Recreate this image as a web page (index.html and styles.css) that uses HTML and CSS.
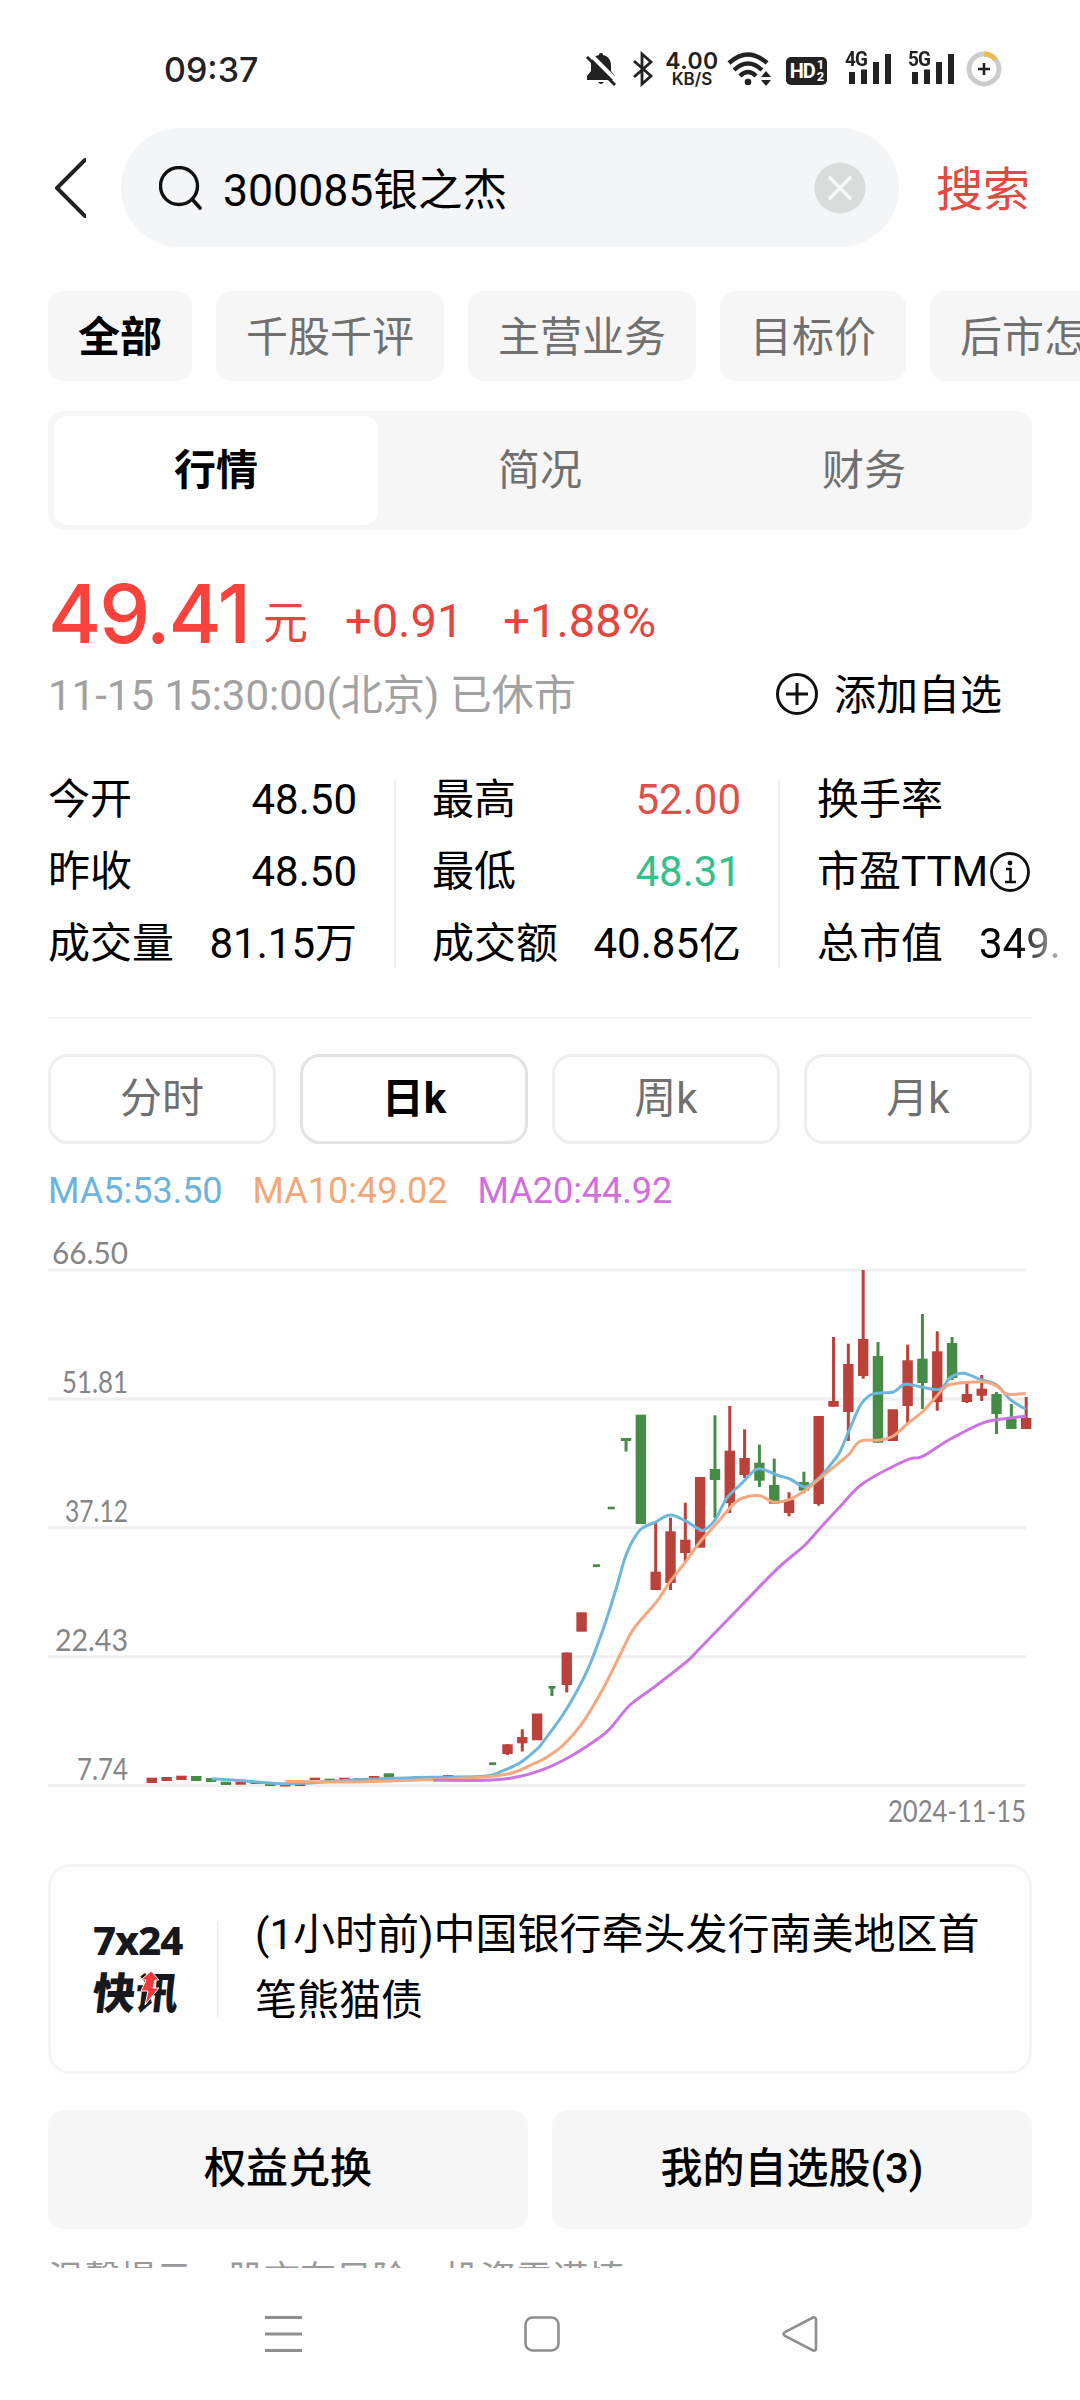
FILE: index.html
```html
<!DOCTYPE html>
<html lang="zh-CN">
<head>
<meta charset="utf-8">
<title>300085银之杰</title>
<link rel="stylesheet" href="styles.css">
</head>
<body>
<div class="screen">
  <header class="status">
    <span class="clock">09:37</span>
    <div class="status-icons">
      <svg class="i-bell" width="32" height="36" viewBox="0 0 32 36"><path d="M16 2c-1.500 0-2 .8-2 2C9 5 6 9 6 14v6l-4 5v4h28v-4l-4-5v-6c0-5-3-9-8-10 0-1.200-.5-2-2-2z" fill="#222"/><path d="M13 31h6q-3 4-6 0z" fill="#222"/><path d="M5 3l28 28" stroke="#fff" stroke-width="4"/><path d="M2 6l28 28" stroke="#222" stroke-width="3"/></svg>
      <svg class="i-bt" width="22" height="36" viewBox="0 0 22 36"><path d="M2 10l17 15-9 8V3l9 8L2 26" fill="none" stroke="#222" stroke-width="2.800"/></svg>
      <div class="speed"><b>4.00</b><span>KB/S</span></div>
      <svg class="i-wifi" width="46" height="36" viewBox="0 0 46 36"><g fill="none" stroke="#222" stroke-width="4.400"><path d="M2 12Q21-5 40 12"/><path d="M7 19Q21 6 35 19"/><path d="M13 25Q21 17 29 25"/></g><circle cx="21" cy="31" r="3.300" fill="#222"/><path d="M34 26l5-6 5 6zM34 29h10l-5 6z" fill="#222"/></svg>
      <div class="hd"><span>HD</span><span class="hd-n"><i>1</i><i>2</i></span></div>
      <div class="sig"><em>4G</em><svg width="46" height="36" viewBox="0 0 46 36"><path d="M3 21h6v12H3zM15 18.500h6V33h-6zM27 11h6v22h-6zM39 3h6v30h-6z" fill="#222"/></svg></div>
      <div class="sig"><em>5G</em><svg width="46" height="36" viewBox="0 0 46 36"><path d="M3 21h6v12H3zM15 18.500h6V33h-6zM27 11h6v22h-6zM39 3h6v30h-6z" fill="#222"/></svg></div>
      <svg class="i-batt" width="36" height="36" viewBox="0 0 36 36"><circle cx="18" cy="18" r="15" fill="none" stroke="#ccc" stroke-width="5"/><path d="M18 3A15 15 0 0 1 29.500 8.500" fill="none" stroke="#e9bd4d" stroke-width="5"/><path d="M18 12v12M12 18h12" stroke="#222" stroke-width="2.600"/></svg>
    </div>
  </header>

  <div class="searchbar">
    <svg class="back" width="34" height="62" viewBox="0 0 34 62"><path d="M33 3L5 31l28 28" fill="none" stroke="#222" stroke-width="4" stroke-linecap="round" stroke-linejoin="round"/></svg>
    <div class="field">
      <svg width="44" height="44" viewBox="0 0 44 44"><circle cx="20" cy="20" r="18.500" fill="none" stroke="#111" stroke-width="3.400"/><path d="M33 33l8 9" stroke="#111" stroke-width="3.600" stroke-linecap="round"/></svg>
      <span class="query">300085银之杰</span>
      <svg class="clear" width="52" height="52" viewBox="0 0 52 52"><circle cx="26" cy="26" r="25.500" fill="#dadbdb"/><path d="M16 16l20 20M36 16L16 36" stroke="#f6f7f7" stroke-width="3.600" stroke-linecap="round"/></svg>
    </div>
    <span class="go">搜索</span>
  </div>

  <nav class="chips">
    <span class="chip on">全部</span><span class="chip">千股千评</span><span class="chip">主营业务</span><span class="chip">目标价</span><span class="chip">后市怎么看</span>
  </nav>

  <div class="segment"><span class="on">行情</span><span>简况</span><span>财务</span></div>

  <div class="price"><span class="now">49.41</span><span class="unit">元</span><span class="chg">+0.91</span><span class="pct">+1.88%</span></div>
  <div class="meta">
    <span class="time">11-15 15:30:00(北京) 已休市</span>
    <span class="add"><svg width="44" height="44" viewBox="0 0 44 44"><path d="M22 11v22M11 22h22" stroke="#111" stroke-width="3"/><circle cx="22" cy="22" r="19.500" fill="none" stroke="#111" stroke-width="3"/></svg>添加自选</span>
  </div>

  <section class="stats">
    <div class="col"><p><span>今开</span><span class="v">48.50</span></p><p><span>昨收</span><span class="v">48.50</span></p><p><span>成交量</span><span class="v">81.15万</span></p></div>
    <div class="col"><p><span>最高</span><span class="v up">52.00</span></p><p><span>最低</span><span class="v down">48.31</span></p><p><span>成交额</span><span class="v">40.85亿</span></p></div>
    <div class="col last"><p><span>换手率</span></p><p class="pe"><span>市盈TTM</span><svg width="42" height="42" viewBox="0 0 42 42"><circle cx="21" cy="21" r="18.500" fill="none" stroke="#111" stroke-width="2.800"/><circle cx="21" cy="12" r="2.400" fill="#111"/><path d="M17 18h4.500v13M16 31h11" fill="none" stroke="#111" stroke-width="2.600"/></svg></p><p><span>总市值</span><span class="cut">349.</span></p></div>
  </section>
  <hr>

  <div class="periods"><span>分时</span><span class="on">日k</span><span>周k</span><span>月k</span></div>
  <div class="legend"><span class="ma5">MA5:53.50</span><span class="ma10">MA10:49.02</span><span class="ma20">MA20:44.92</span></div>
  <svg class="chart" id="chart" width="1080" height="620" viewBox="0 1220 1080 620"></svg>

  <section class="news">
    <div class="logo"><span class="l1">7x24</span><span class="l2">快讯</span><svg class="bolt" width="22" height="36" viewBox="0 0 22 36"><path d="M12 0l8 9h-4l-2 8h6L6 34l3-14H2l5-11H2z" fill="#f4393c" stroke="#fefefe" stroke-width="1"/></svg></div>
    <p>(1小时前)中国银行牵头发行南美地区首笔熊猫债</p>
  </section>

  <div class="actions"><span>权益兑换</span><span class="mine">我的自选股(3)</span></div>
  <div class="tip">温馨提示：股市有风险，投资需谨慎</div>

  <footer class="sysnav">
    <svg width="38" height="38" viewBox="0 0 38 38"><path d="M0 2.500h37M0 19h37M0 35.500h37" stroke="#8f8f8f" stroke-width="2.800"/></svg>
    <svg width="38" height="38" viewBox="0 0 38 38"><rect x="2.500" y="2.500" width="33" height="33" rx="7" fill="none" stroke="#8f8f8f" stroke-width="2.600"/></svg>
    <svg width="38" height="38" viewBox="0 0 38 38"><path d="M32 2.500L4 17q-3 2 0 4L32 35.500q3 .5 3-2V4.500q0-2.500-3-2z" fill="none" stroke="#8f8f8f" stroke-width="2.600"/></svg>
  </footer>
</div>
<script src="chart.js"></script>
</body>
</html>
```
FILE: styles.css
```css
* { box-sizing: border-box; margin: 0; padding: 0; }
body { width: 1080px; height: 2400px; overflow: hidden; background: #fefefe; color: #000; font-family: Roboto, "Noto Sans CJK SC", sans-serif; font-size: 42px; }
svg { display: block; flex: none; }
span { white-space: nowrap; }
.screen { height: 2400px; display: flex; flex-direction: column; overflow: hidden; }

.status { height: 128px; flex: none; padding: 10px 78px 0 164px; display: flex; align-items: center; justify-content: space-between; }
.clock { font-family: Inter, sans-serif; font-size: 34px; font-weight: 500; color: #222; }
.status-icons { display: flex; align-items: center; height: 36px; color: #222; }
.i-bt { margin-left: 15px; }
.speed { width: 52px; margin-left: 12px; display: flex; flex-direction: column; align-items: center; font-family: Inter, sans-serif; }
.speed b { font-size: 23px; line-height: 20px; font-weight: 600; letter-spacing: 0.500px; }
.speed span { font-size: 17px; line-height: 17px; font-weight: 600; }
.i-wifi { margin-left: 9px; }
.hd { margin-left: 13px; margin-top: 3px; width: 41px; height: 28px; border-radius: 5px; background: #222; color: #fff; display: flex; align-items: center; justify-content: center; gap: 2px; font-size: 20px; font-weight: 700; letter-spacing: -1px; }
.hd-n { display: flex; flex-direction: column; }
.hd-n i { font-size: 13px; line-height: 12px; font-style: normal; }
.sig { position: relative; margin-left: 19px; width: 46px; }
.sig + .sig { margin-left: 17px; }
.sig em { position: absolute; left: -1px; top: 0; font-size: 21px; line-height: 17px; font-weight: 700; font-style: normal; letter-spacing: -1px; transform: scaleX(0.9); transform-origin: left; }
.i-batt { margin-left: 11px; }

.searchbar { height: 119px; flex: none; padding-left: 52px; display: flex; align-items: center; }
.field { width: 778px; height: 119px; margin-left: 35px; padding: 0 33px 0 38px; border-radius: 60px; background: #f3f5f6; display: flex; align-items: center; }
.query { margin: -3px 0 0 20px; font-size: 44.600px; color: #000; }
.clear { margin-left: auto; }
.go { margin: -4px 0 0 37px; font-size: 47px; color: #e04a40; }

.chips { margin-top: 44px; height: 90px; flex: none; padding-left: 48px; display: flex; gap: 24px; }
.chip { flex: none; padding: 2px 30px 0; line-height: 90px; border-radius: 16px; background: #f6f6f6; color: #707070; }
.chip.on { color: #000; font-weight: 700; }

.segment { margin: 30px 48px 0; height: 119px; flex: none; padding: 5px 6px; border-radius: 16px; background: #f6f6f6; display: grid; grid-template-columns: 1fr 1fr 1fr; color: #707070; text-align: center; line-height: 109px; }
.segment .on { background: #fff; border-radius: 14px; color: #000; font-weight: 700; }

.price { margin-top: 30px; height: 92px; flex: none; padding-left: 48px; display: flex; align-items: baseline; color: #e64540; }
.now { font-family: Inter, sans-serif; font-size: 81px; line-height: 108px; font-weight: 500; letter-spacing: -2px; color: #f9423c; width: 215px; }
.unit { font-size: 45px; transform: translateY(-4px); }
.chg { margin-left: 37px; font-size: 47px; transform: translateY(-6px); }
.pct { margin-left: 40px; font-size: 47px; transform: translateY(-6px); }

.meta { margin-top: 9px; height: 62px; flex: none; padding: 0 78px 0 48px; display: flex; justify-content: space-between; align-items: center; }
.time { margin-top: -2px; color: #a2a2a2; }
.add { margin-top: -2px; display: flex; align-items: center; gap: 15px; }
.add svg { margin-top: 6px; }

.stats { margin-top: 41px; height: 216px; flex: none; padding-left: 48px; display: flex; }
.col { width: 384px; flex: none; padding-right: 75px; position: relative; }
.col p { height: 72px; line-height: 70px; display: flex; justify-content: space-between; align-items: center; }
.col:not(.last)::after { content: ""; position: absolute; right: 36px; top: 16px; width: 2px; height: 188px; background: #efefef; }
.col .up { color: #de5049; }
.col .down { color: #34c08a; }
.col.last { padding: 0 0 0 1px; }
.col.last p { justify-content: flex-start; }
.pe svg { margin-left: 1px; }
.cut { margin-left: 36px; background: linear-gradient(90deg, #000 45%, #bbb 100%); background-clip: text; -webkit-background-clip: text; color: transparent; }
hr { margin: 37px 48px 0; border: 0; height: 2px; flex: none; background: #f5f5f5; }

.periods { margin: 35px 48px 0; height: 90px; flex: none; display: grid; grid-template-columns: repeat(4, 1fr); gap: 24px; }
.periods span { border: 3px solid #eeeeee; border-radius: 20px; line-height: 83px; text-align: center; color: #707070; }
.periods .on { border-color: #e2e3e3; color: #000; font-weight: 700; }

.legend { height: 76px; flex: none; padding: 10px 0 0 48px; display: flex; gap: 30px; align-items: center; margin-top: 4px; font-size: 36px; }
.ma5 { color: #6db4dc; }
.ma10 { color: #f2a878; }
.ma20 { color: #d26ee0; }

.chart { margin-top: -4px; }
.chart text { font-family: Lato, sans-serif; font-size: 31px; fill: #858585; }
.chart .grid { stroke: #efefef; stroke-width: 3; }
.chart .line { fill: none; stroke-width: 3; stroke-linejoin: round; }

.news { margin: 24px 48px 0; height: 210px; flex: none; border: 3px solid #f5f5f5; border-radius: 22px; display: flex; align-items: center; padding-left: 42px; }
.logo { position: relative; width: 126px; height: 96px; border-right: 2px solid #f0f0f0; display: flex; flex-direction: column; color: #16181d; }
.l1 { font-family: "Noto Sans", sans-serif; font-weight: 800; font-size: 40px; line-height: 38px; letter-spacing: -1px; }
.l2 { font-family: "Noto Sans CJK SC", sans-serif; font-weight: 900; font-size: 43px; line-height: 62px; transform: skewX(-6deg); }
.bolt { position: absolute; left: 46px; top: 50px; }
.news p { width: 740px; margin-left: 36px; line-height: 66px; margin-top: -2px; }

.actions { margin: 36px 48px 0; height: 119px; flex: none; display: grid; grid-template-columns: 1fr 1fr; gap: 24px; }
.actions span { background: #f6f6f6; border-radius: 16px; text-align: center; line-height: 118px; font-weight: 500; }
.tip { height: 17px; margin: 22px 48px 0; flex: none; overflow: hidden; font-size: 36px; line-height: 58px; color: #999; }

.sysnav { margin-top: 47px; height: 38px; flex: none; padding: 0 261px 0 265px; display: flex; justify-content: space-between; }
```
FILE: chart.js
```javascript
// Daily candles: [colour, body top, body bottom, wick top, wick bottom, body width]
const candles = [
  ['r',1777.7,1783],['r',1777,1781],['r',1775.7,1780],['g',1776,1781],['g',1778,1782],
  ['g',1781.7,1785],['r',1781.7,1784.7],['r',1782,1784],['g',1783.7,1786],['r',1784.5,1786.5],
  ['r',1784,1786],['r',1777.7,1780],['g',1778.7,1780.7],['r',1777.7,1780],['g',1778,1779.3],
  ['r',1776,1778],['g',1773.3,1778],['g',1777,1778],['r',1776,1777.3],['g',1776,1777.3],
  ['r',1775,1776.7],['g',1776,1777],['r',1776,1777],['g',1762.3,1765,0,0,7],
  ['r',1744.3,1754,1744.3,1755],['r',1737,1743.3,1729.3,1751.5],['r',1713.5,1740.3],
  ['g',1686,1688.7,1686,1696,7],['r',1652.5,1685,1652.5,1692.5],['r',1612.3,1631.7],
  ['g',1564.3,1567,0,0,7],['g',1506.7,1509.3,0,0,7],['g',1438,1441,1438,1451.5],['g',1414.7,1524],
  ['r',1571.7,1590,1522.6,1590],['r',1531.3,1583,1517.7,1590],['r',1539.7,1553,1502.7,1561.7],
  ['r',1477,1547.7],['g',1469,1480,1415.3,1518],['r',1450.7,1503,1406,1513],
  ['r',1458,1475,1429.3,1478],['g',1462.7,1480.7,1444.7,1487],['g',1485,1503.7,1458.7,1503.7],
  ['r',1499.7,1513,1492.3,1516.3],['g',1482,1490.7,1471.7,1493.3],['r',1416,1504,1416,1505.7],
  ['r',1401,1406.7,1337,1406.7],['r',1364,1412,1343.7,1441],['r',1339,1376,1270,1378.7],
  ['g',1356,1442.7,1342,1442.7],['r',1409.3,1441],['r',1360.3,1406,1344.7,1423],
  ['g',1358.7,1383,1314,1409],['r',1351.3,1402,1331.3,1410.7],['g',1343,1378,1337,1380],
  ['r',1394,1402,1383,1403],['r',1388.7,1395.7,1375,1401],['g',1394,1414,1392,1434],
  ['g',1419,1429,1404,1429],['r',1418,1429,1397,1429]
];
const averages = {
  '#6fb6da': [211.7,1778.7,233,1780,280,1783.7,310,1783,353,1780,430,1777.3,485,1776.3,503,1770.7,520,1762.7,536.7,1749.3,543.3,1741.7,566,1710,586.7,1671.7,604,1626.7,616.7,1586.7,626.7,1553.3,640,1530,655,1522.3,670,1515,685,1520.7,698.3,1528.7,704,1530,715,1520,726.7,1498.3,741.7,1483.3,755,1470,763.3,1469.5,776.7,1475,790,1479,805,1487,818,1479,831.7,1463.3,840,1451.7,849.3,1430,860,1406,870,1395.3,880,1393,893.3,1392,905,1384.3,920,1386.7,940,1389.3,950,1377.7,963.3,1373.3,980,1379.3,996.7,1385,1010,1399.3,1025.7,1409.3],
  '#f5a77d': [285.3,1781.3,353,1782,433,1779.5,485,1777,513,1772.7,533,1764,543.3,1759.3,563.3,1745,583.3,1721.7,603.3,1688.3,620,1655,633.3,1629.3,656.7,1601.7,670,1581.7,685,1562.7,699.3,1542.7,716.7,1523.3,733.3,1504.3,743.3,1497.7,760,1495.7,773.3,1502,790,1499.3,806.7,1489.3,820,1478.3,838.3,1463.3,849.3,1454,860,1441.3,880,1440,893.3,1436,906.7,1424.3,923.3,1411,943.3,1389,953.3,1384,983.3,1381.7,996.7,1386,1006.7,1394,1025.7,1393.5],
  '#cc74e2': [433.3,1780.3,485,1780.3,513,1777.7,540,1770.7,570,1756.7,600,1737.3,611.7,1726.7,630,1705,653.3,1687.7,686.7,1661.7,700,1648.3,740,1607,776.7,1569.3,805,1545,820,1528.3,840,1506.7,863.3,1483.3,906.7,1460,921.7,1456.7,950,1439.3,981.7,1423.3,1000,1419.3,1026,1416]
};

// Smooth path through the points of one moving average
function smooth(p) {
  const at = i => { i = Math.max(0, Math.min(p.length / 2 - 1, i)); return [p[2 * i], p[2 * i + 1]]; };
  let d = 'M' + at(0);
  for (let i = 0; i < p.length / 2 - 1; i++) {
    const [a, b, c, e] = [at(i - 1), at(i), at(i + 1), at(i + 2)];
    d += `C${b[0] + (c[0] - a[0]) / 6} ${b[1] + (c[1] - a[1]) / 6} ${c[0] - (e[0] - b[0]) / 6} ${c[1] - (e[1] - b[1]) / 6} ${c[0]} ${c[1]}`;
  }
  return d;
}

let out = '';
[['66.50', 76], ['51.81', 66], ['37.12', 63], ['22.43', 73], ['7.74', 51]].forEach(([label, width], i) => {
  const y = 1270 + i * 128.9;
  out += `<path class="grid" d="M48 ${y}H1026"/><text x="${128 - width}" y="${y - 6}" textLength="${width}" lengthAdjust="spacingAndGlyphs">${label}</text>`;
});
candles.forEach(([colour, top, bottom, high, low, width = 10.4], i) => {
  const x = 151.8 + 14.82 * i, fill = colour === 'r' ? '#bb413b' : '#468b46';
  out += `<rect x="${x - width / 2}" y="${top}" width="${width}" height="${bottom - top}" fill="${fill}"/>`;
  if (high) out += `<rect x="${x - 1.5}" y="${high}" width="3" height="${low - high}" fill="${fill}"/>`;
});
for (const [stroke, points] of Object.entries(averages)) out += `<path class="line" stroke="${stroke}" d="${smooth(points)}"/>`;
out += '<text x="888" y="1822" textLength="138" lengthAdjust="spacingAndGlyphs">2024-11-15</text>';
document.getElementById('chart').innerHTML = out;
```
